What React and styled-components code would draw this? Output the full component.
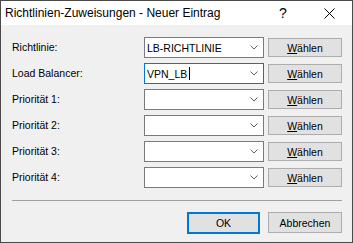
import React from 'react';
import styled, { createGlobalStyle } from 'styled-components';

const ROW_HEIGHT = 21;
const LABEL_WIDTH = 132;
const COMBO_WIDTH = 120;
const BUTTON_WIDTH = 74;

const GlobalStyle = createGlobalStyle`
  html, body {
    margin: 0;
    padding: 0;
    background: #f0f0f0;
  }
`;

const Window = styled.div`
  width: 353px;
  height: 243px;
  box-sizing: border-box;
  border: 1px solid #4a4a4a;
  background: #f0f0f0;
  display: flex;
  flex-direction: column;
  font-family: "Liberation Sans", Arial, sans-serif;
  color: #000;
`;

const TitleBar = styled.div`
  display: flex;
  align-items: center;
  height: 24px;
  background: #fff;
`;

const Title = styled.div`
  flex: 1;
  padding-left: 4px;
  font-size: 12px;
  line-height: 24px;
  white-space: nowrap;
`;

const CaptionButton = styled.div`
  width: 46px;
  height: 24px;
  display: flex;
  align-items: center;
  justify-content: center;
  font-size: 14px;
`;

const Body = styled.div`
  padding: 12px 10px 0 11px;
  font-size: 10.5px;
`;

const Form = styled.div`
  display: flex;
  flex-direction: column;
  gap: 5px;
`;

const Row = styled.div`
  display: flex;
  align-items: flex-start;
  height: ${ROW_HEIGHT}px;
`;

const Label = styled.div`
  width: ${LABEL_WIDTH}px;
  line-height: ${ROW_HEIGHT}px;
  white-space: nowrap;
`;

const Combo = styled.div`
  width: ${COMBO_WIDTH}px;
  height: ${ROW_HEIGHT}px;
  box-sizing: border-box;
  border: 1px solid ${props => props.focused ? '#0078d7' : '#7a7a7a'};
  background: #fff;
  display: flex;
  align-items: center;
  padding: 0 5px 0 2px;
`;

const ComboText = styled.div`
  flex: 1;
  display: flex;
  align-items: center;
  white-space: nowrap;
`;

const Caret = styled.span`
  display: inline-block;
  width: 1px;
  height: 13px;
  margin-left: 2px;
  background: #000;
`;

const Button = styled.div`
  width: ${props => props.width || BUTTON_WIDTH}px;
  height: ${props => props.height || 19}px;
  box-sizing: border-box;
  border: ${props => props.isDefault ? '2px solid #0078d7' : '1px solid #adadad'};
  background: #e1e1e1;
  display: flex;
  align-items: center;
  justify-content: center;
  white-space: nowrap;
`;

const ChooseButton = styled(Button)`
  margin-left: 4px;
  margin-top: 1px;
`;

const Separator = styled.div`
  margin-top: 12px;
  height: 1px;
  background: #a0a0a0;
`;

const Footer = styled.div`
  display: flex;
  justify-content: flex-end;
  gap: 8px;
  margin-top: 11px;
`;

const Chevron = () => (
  <svg width="8" height="5" viewBox="0 0 8 5">
    <polyline points="0.5,0.5 4,4 7.5,0.5" fill="none" stroke="#606060" strokeWidth="1" />
  </svg>
);

const CloseIcon = () => (
  <svg width="11" height="11" viewBox="0 0 11 11">
    <path d="M0.5 0.5 L10.5 10.5 M10.5 0.5 L0.5 10.5" stroke="#000" strokeWidth="1" />
  </svg>
);

const rows = [
  { label: 'Richtlinie:', value: 'LB-RICHTLINIE' },
  { label: 'Load Balancer:', value: 'VPN_LB', focused: true },
  { label: 'Priorität 1:', value: '' },
  { label: 'Priorität 2:', value: '' },
  { label: 'Priorität 3:', value: '' },
  { label: 'Priorität 4:', value: '' },
];

export default function App() {
  return (
    <>
      <GlobalStyle />
      <Window>
        <TitleBar>
          <Title>Richtlinien-Zuweisungen - Neuer Eintrag</Title>
          <CaptionButton>?</CaptionButton>
          <CaptionButton><CloseIcon /></CaptionButton>
        </TitleBar>
        <Body>
          <Form>
            {rows.map(row => (
              <Row key={row.label}>
                <Label>{row.label}</Label>
                <Combo focused={row.focused}>
                  <ComboText>
                    {row.value}
                    {row.focused && <Caret />}
                  </ComboText>
                  <Chevron />
                </Combo>
                <ChooseButton><u>W</u>ählen</ChooseButton>
              </Row>
            ))}
          </Form>
          <Separator />
          <Footer>
            <Button width={73} height={22} isDefault>OK</Button>
            <Button height={21}>Abbrechen</Button>
          </Footer>
        </Body>
      </Window>
    </>
  );
}
